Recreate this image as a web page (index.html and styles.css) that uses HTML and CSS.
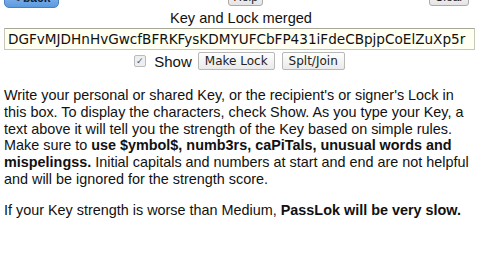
FILE: index.html
```html
<!DOCTYPE html>
<html>
<head>
<meta charset="utf-8">
<link rel="stylesheet" href="styles.css">
</head>
<body>
<div class="page">
  <div class="topbar">
    <button class="btn-back">&lt; back</button>
    <button class="btn-top help">Help</button>
    <button class="btn-top clear">Clear</button>
  </div>
  <div class="title">Key and Lock merged</div>
  <div class="keyrow">
    <div class="keybox">DGFvMJDHnHvGwcfBFRKFysKDMYUFCbFP431iFdeCBpjpCoElZuXp5r</div>
  </div>
  <div class="controls">
    <span class="check">&#10003;</span>
    <span class="show">Show</span>
    <button class="btn">Make Lock</button>
    <button class="btn">Splt/Join</button>
  </div>
  <p class="text">Write your personal or shared Key, or the recipient's or signer's Lock in this box. To display the characters, check Show. As you type your Key, a text above it will tell you the strength of the Key based on simple rules. Make sure to <b>use $ymbol$, numb3rs, caPiTals, unusual words and mispelingss.</b> Initial capitals and numbers at start and end are not helpful and will be ignored for the strength score.</p>
  <p class="text p2">If your Key strength is worse than Medium, <b>PassLok will be very slow.</b></p>
</div>
</body>
</html>
```
FILE: styles.css
```css
html, body {
  margin: 0;
  padding: 0;
  background: #fff;
  overflow: hidden;
}
.page {
  width: 480px;
  height: 270px;
  position: relative;
  font-family: "Liberation Sans", Arial, sans-serif;
  color: #111;
}
.topbar {
  height: 8px;
  position: relative;
}
.btn-back {
  position: absolute;
  left: 4px;
  top: -12px;
  width: 55px;
  height: 20px;
  border: 1px solid #4a7fc0;
  border-radius: 5px;
  background: linear-gradient(#9cc4f0, #5b9ae0);
  color: #123;
  font: bold 12px "Liberation Sans", Arial, sans-serif;
  padding: 0;
}
.btn-top {
  position: absolute;
  top: -12px;
  height: 18px;
  border: 1px solid #aaa;
  border-radius: 3px;
  background: linear-gradient(#fdfdfd, #e4e4e4);
  font: 12px "Liberation Sans", Arial, sans-serif;
  color: #222;
  padding: 0;
}
.help { left: 228px; width: 35px; }
.clear { left: 429px; width: 40px; }
.title {
  text-align: center;
  font-size: 14.6px;
  line-height: 20px;
  padding-left: 2px;
}
.keyrow {
  padding: 0 0 0 4px;
}
.keybox {
  width: 466px;
  height: 20px;
  border: 1px solid #c8c8b8;
  border-top-color: #a8a898;
  background: #fffff2;
  font-family: "DejaVu Sans", sans-serif;
  font-size: 13.6px;
  line-height: 20px;
  padding-left: 3px;
  white-space: nowrap;
  overflow: hidden;
  box-sizing: content-box;
}
.controls {
  display: flex;
  align-items: center;
  justify-content: center;
  margin-top: 1px;
  height: 20px;
  padding-left: 6px;
}
.check {
  width: 10px;
  height: 10px;
  border: 1px solid #bbb;
  border-radius: 2px;
  background: #eee;
  font-size: 9px;
  line-height: 10px;
  text-align: center;
  color: #555;
  margin-right: 8px;
}
.show {
  font-size: 15px;
  margin-right: 6px;
}
.btn {
  height: 18px;
  border: 1px solid #b8b8b8;
  border-radius: 2px;
  background: linear-gradient(#fefefe, #eaeaea);
  font: 12px "DejaVu Sans", sans-serif;
  color: #222;
  padding: 0 6px;
  margin-right: 7px;
}
.text {
  margin: 16px 0 0 4px;
  width: 476px;
  font-size: 14.4px;
  line-height: 16.8px;
}
.p2 {
  margin-top: 14px;
}
```
